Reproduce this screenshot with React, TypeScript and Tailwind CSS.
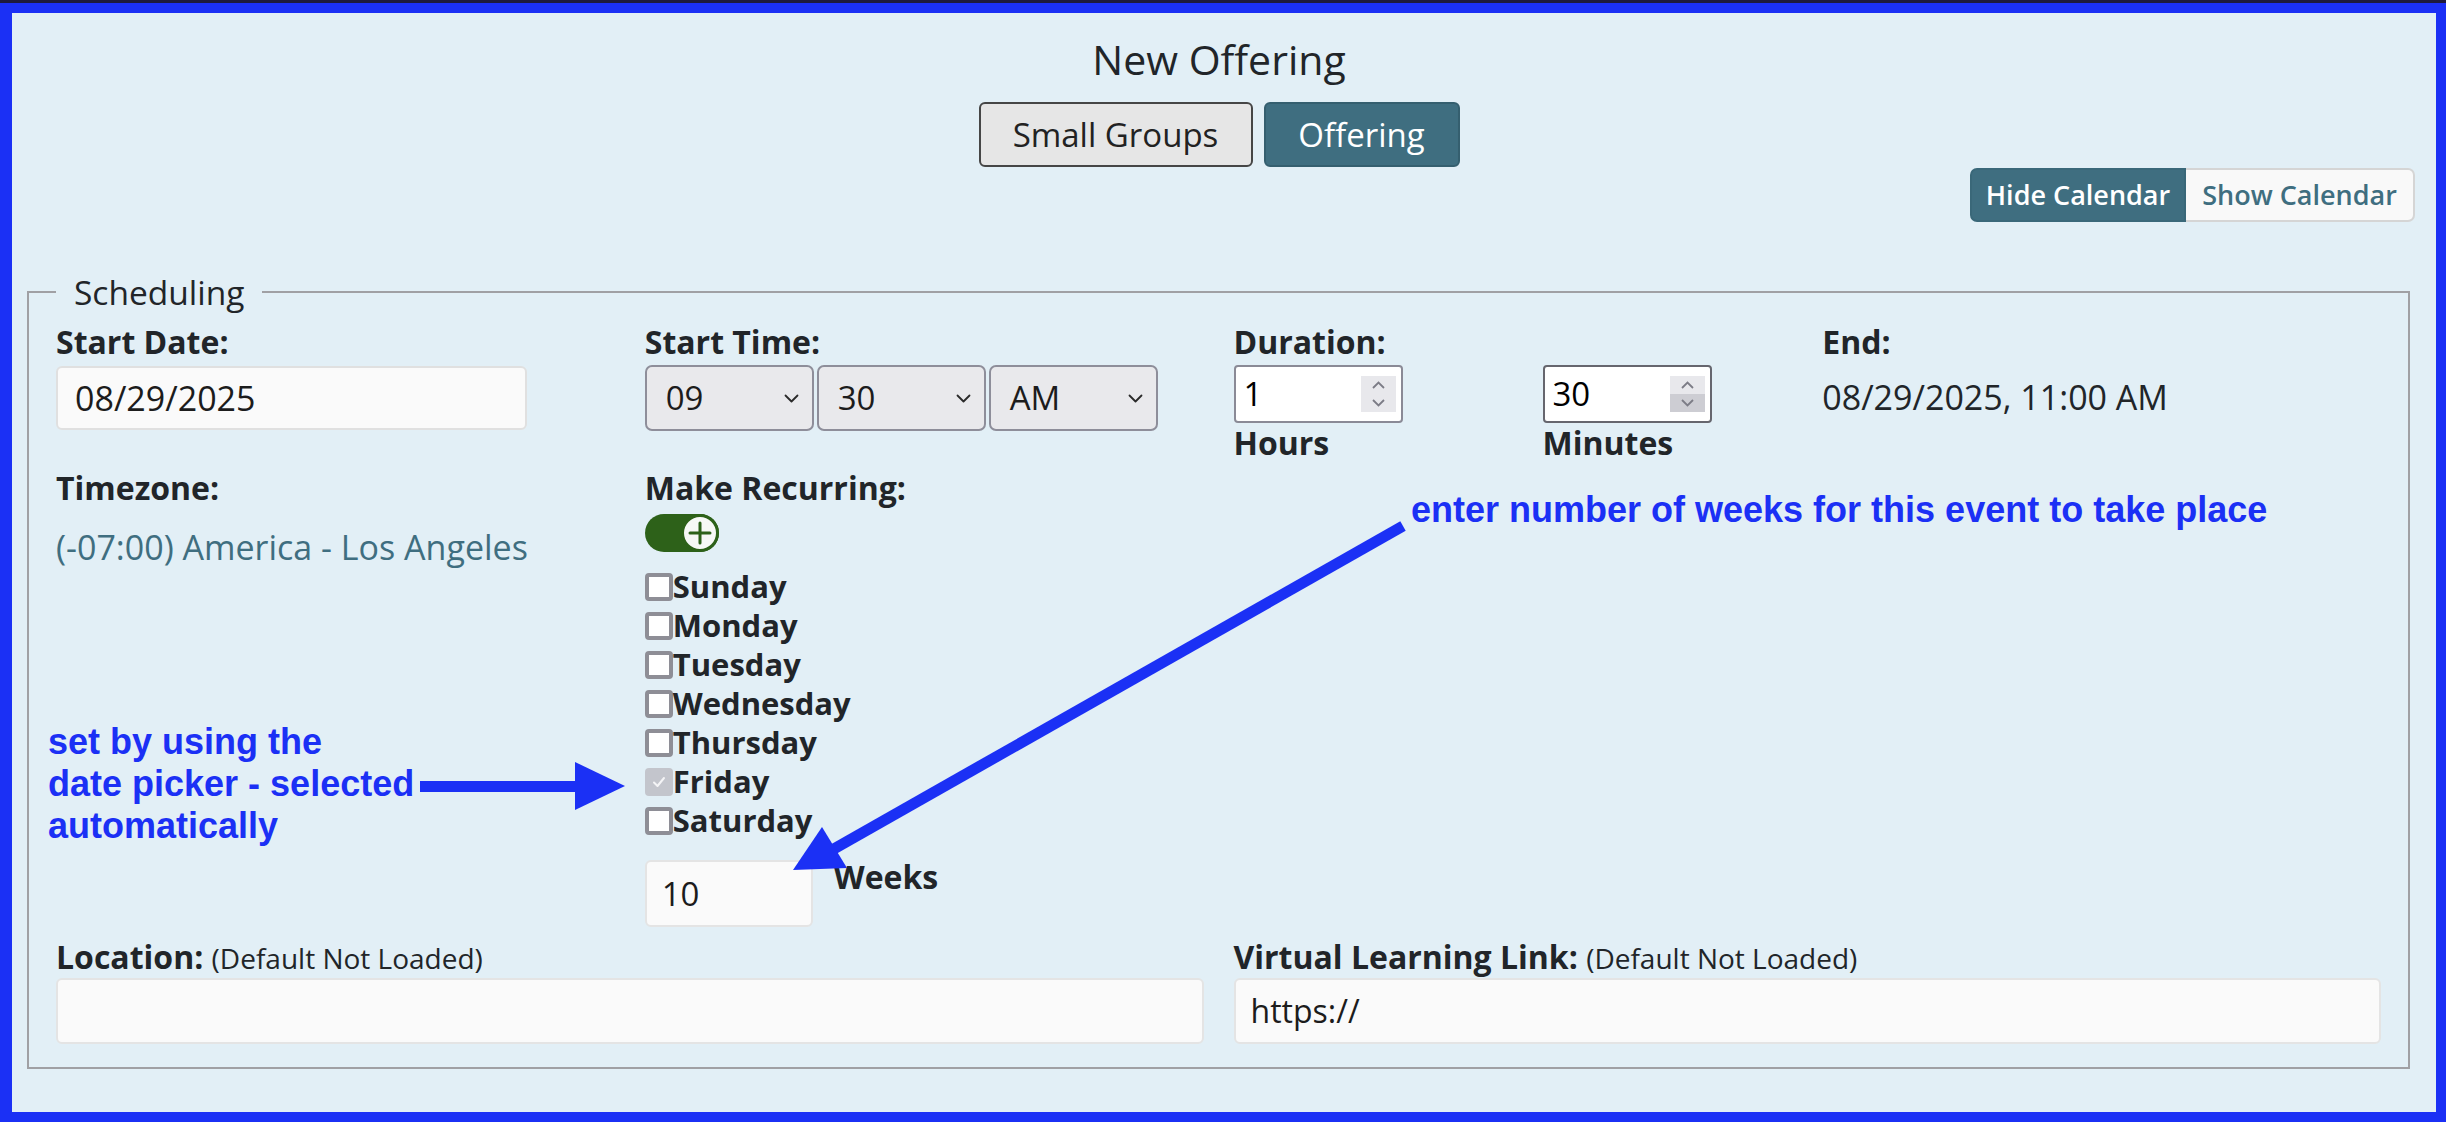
const days = ['Sunday', 'Monday', 'Tuesday', 'Wednesday', 'Thursday', 'Friday', 'Saturday'];

function Chevron() {
  return (
    <svg width="15" height="9" viewBox="0 0 15 9" fill="none" stroke="#2a2a2a" strokeWidth="1.8" strokeLinecap="round" strokeLinejoin="round">
      <path d="M1.5 1.5 L7.5 7.5 L13.5 1.5" />
    </svg>
  );
}

function Select({ value }: { value: string }) {
  return (
    <div className="flex h-[66px] w-[169px] items-center justify-between rounded-[7px] border-2 border-[#8e8e9a] bg-[#e9e9ec] pl-[19px] pr-[13px] text-[33px] text-[#1c1c1c]">
      <span>{value}</span>
      <Chevron />
    </div>
  );
}

function Spinner({ pressed }: { pressed?: boolean }) {
  return (
    <div className="flex h-[36px] w-[35px] flex-col">
      <div className="flex flex-1 items-center justify-center bg-[#e8e8ec]">
        <svg width="13" height="8" viewBox="0 0 13 8" fill="none" stroke="#7c7c86" strokeWidth="1.8">
          <path d="M1 7 L6.5 1.5 L12 7" />
        </svg>
      </div>
      <div className={`flex flex-1 items-center justify-center ${pressed ? 'bg-[#cdcdd3]' : 'bg-[#e8e8ec]'}`}>
        <svg width="13" height="8" viewBox="0 0 13 8" fill="none" stroke="#7c7c86" strokeWidth="1.8">
          <path d="M1 1 L6.5 6.5 L12 1" />
        </svg>
      </div>
    </div>
  );
}

function NumberBox({ value, dark, pressed }: { value: string; dark?: boolean; pressed?: boolean }) {
  return (
    <div
      className={`mt-[3px] flex h-[58px] w-[169px] items-center justify-between rounded-[4px] border-2 bg-white pl-[8px] pr-[5px] text-[33px] text-black ${
        dark ? 'border-[#66666e]' : 'border-[#8a8a96]'
      }`}
    >
      <span>{value}</span>
      <Spinner pressed={pressed} />
    </div>
  );
}

function DayCheck({ day }: { day: string }) {
  const friday = day === 'Friday';
  return (
    <div className="flex h-[39px] items-center text-[31px] font-bold leading-[39px] text-[#212529]">
      {friday ? (
        <div className="flex h-[28px] w-[28px] items-center justify-center rounded-[4px] bg-[#c3c5cc]">
          <svg width="16" height="16" viewBox="0 0 16 16" fill="none" stroke="#f4f4f6" strokeWidth="2" strokeLinecap="round" strokeLinejoin="round">
            <path d="M3 8.5 L6.5 12 L13 4" />
          </svg>
        </div>
      ) : (
        <div className="h-[28px] w-[28px] rounded-[4px] border-4 border-[#8e8e96] bg-white" />
      )}
      <span>{day}</span>
    </div>
  );
}

export default function App() {
  return (
    <div className="relative h-screen w-full bg-[#1e1a3c] pt-[3px] font-['Open_Sans',sans-serif] text-[#212529]">
      <div className="flex h-full flex-col border-t-[10px] border-r-[10px] border-b-[10px] border-l-[12px] border-[#1b30f5] bg-[#e2eff6]">
        {/* header */}
        <div className="pr-[10px]">
          <h1 className="mt-[22px] text-center text-[41px] leading-[49px]">New Offering</h1>
          <div className="mt-[18px] flex justify-center gap-[11px]">
            <button className="h-[65px] w-[274px] rounded-[6px] border-2 border-[#464646] bg-[#e6e6e6] text-[33px] text-[#222]">
              Small Groups
            </button>
            <button className="h-[65px] w-[196px] rounded-[6px] border-2 border-[#355f6f] bg-[#3f6e80] text-[33px] text-white">
              Offering
            </button>
          </div>
        </div>
        <div className="mr-[21px] mt-[1px] flex justify-end">
          <button className="h-[54px] w-[216px] rounded-l-[7px] border-2 border-[#3a6879] bg-[#3f6e80] text-[27px] font-semibold text-white">
            Hide Calendar
          </button>
          <button className="h-[54px] w-[229px] rounded-r-[7px] border-2 border-l-0 border-[#d5d5d5] bg-[#f9f9f9] text-[27px] font-semibold text-[#3f6e80]">
            Show Calendar
          </button>
        </div>

        {/* scheduling */}
        <fieldset className="ml-[15px] mr-[26px] mt-[50px] border-2 border-[#a0a0a4] px-[27px] pb-[23px] pt-[10px]">
          <legend className="px-[18px] text-[33.5px] leading-[40px]">Scheduling</legend>

          <div className="grid grid-cols-4 gap-x-[30px]">
            <div>
              <div className="text-[32px] font-bold leading-[40px]">Start Date:</div>
              <div className="mt-[4px] flex h-[64px] w-[471px] items-center rounded-[6px] border-2 border-[#e0e0e0] bg-[#fafafa] px-[17px] text-[34px] text-[#1c1c1c]">
                08/29/2025
              </div>
            </div>
            <div>
              <div className="text-[32px] font-bold leading-[40px]">Start Time:</div>
              <div className="mt-[3px] flex gap-[3px]">
                <Select value="09" />
                <Select value="30" />
                <Select value="AM" />
              </div>
            </div>
            <div className="flex flex-col">
              <div className="text-[32px] font-bold leading-[40px]">Duration:</div>
              <div className="flex">
                <div className="w-[309px]">
                  <NumberBox value="1" />
                  <div className="text-[32px] font-bold leading-[40px]">Hours</div>
                </div>
                <div>
                  <NumberBox value="30" dark pressed />
                  <div className="text-[32px] font-bold leading-[40px]">Minutes</div>
                </div>
              </div>
            </div>
            <div>
              <div className="text-[32px] font-bold leading-[40px]">End:</div>
              <div className="mt-[15px] text-[34px] leading-[40px]">08/29/2025, 11:00 AM</div>
            </div>
          </div>

          <div className="mt-[5px] grid grid-cols-4 gap-x-[30px]">
            <div>
              <div className="text-[32px] font-bold leading-[40px]">Timezone:</div>
              <div className="mt-[19px] text-[34px] leading-[40px] text-[#3f6e80]">(-07:00) America - Los Angeles</div>
            </div>
            <div className="col-span-3">
              <div className="text-[32px] font-bold leading-[40px]">Make Recurring:</div>
              <div className="mt-[6px] flex h-[38px] w-[74px] justify-end rounded-full bg-[#2d6119]">
                <div className="flex h-[38px] w-[38px] items-center justify-center rounded-full border-[3px] border-[#2d6119] bg-[#f7f8f6]">
                  <svg width="24" height="24" viewBox="0 0 24 24" fill="none" stroke="#2d6119" strokeWidth="3" strokeLinecap="round">
                    <path d="M12 2 V22 M2 12 H22" />
                  </svg>
                </div>
              </div>
              <div className="mt-[15px] flex flex-col">
                {days.map((d) => (
                  <DayCheck key={d} day={d} />
                ))}
              </div>
              <div className="mt-[20px] flex items-start gap-[21px]">
                <div className="flex h-[67px] w-[168px] items-center rounded-[6px] border-2 border-[#e4e4e4] bg-[#fafafa] px-[15px] text-[33px] text-[#1c1c1c]">
                  10
                </div>
                <div className="-mt-[3px] text-[32px] font-bold leading-[40px]">Weeks</div>
              </div>
            </div>
          </div>

          <div className="mt-[10px] grid grid-cols-2 gap-x-[30px]">
            <div>
              <div className="text-[32px] leading-[40px]">
                <span className="font-bold">Location:</span> <span className="text-[28px]">(Default Not Loaded)</span>
              </div>
              <div className="h-[66px] w-full rounded-[6px] border-2 border-[#e4e4e4] bg-[#fafafa]" />
            </div>
            <div>
              <div className="text-[32px] leading-[40px]">
                <span className="font-bold">Virtual Learning Link:</span> <span className="text-[28px]">(Default Not Loaded)</span>
              </div>
              <div className="flex h-[66px] w-full items-center rounded-[6px] border-2 border-[#e4e4e4] bg-[#fafafa] px-[15px] text-[32px] text-[#1c1c1c]">
                https://
              </div>
            </div>
          </div>
        </fieldset>
      </div>

      {/* annotations */}
      <div className="absolute left-[1411px] top-[492px] whitespace-nowrap font-['Liberation_Sans',Arial,sans-serif] text-[36px] font-bold leading-[36px] text-[#1b30f5]">
        enter number of weeks for this event to take place
      </div>
      <div className="absolute left-[48px] top-[721px] whitespace-nowrap font-['Liberation_Sans',Arial,sans-serif] text-[36px] font-bold leading-[42px] text-[#1b30f5]">
        set by using the
        <br />
        date picker - selected
        <br />
        automatically
      </div>
      <svg className="pointer-events-none absolute left-0 top-0" width="2446" height="1122" viewBox="0 0 2446 1122">
        <line x1="1403" y1="526" x2="832" y2="850" stroke="#1b30f5" strokeWidth="11" />
        <polygon points="793,870 822,827 847,868" fill="#1b30f5" />
        <rect x="420" y="781" width="158" height="11" fill="#1b30f5" />
        <polygon points="575,762 575,810 625,786" fill="#1b30f5" />
      </svg>
    </div>
  );
}
